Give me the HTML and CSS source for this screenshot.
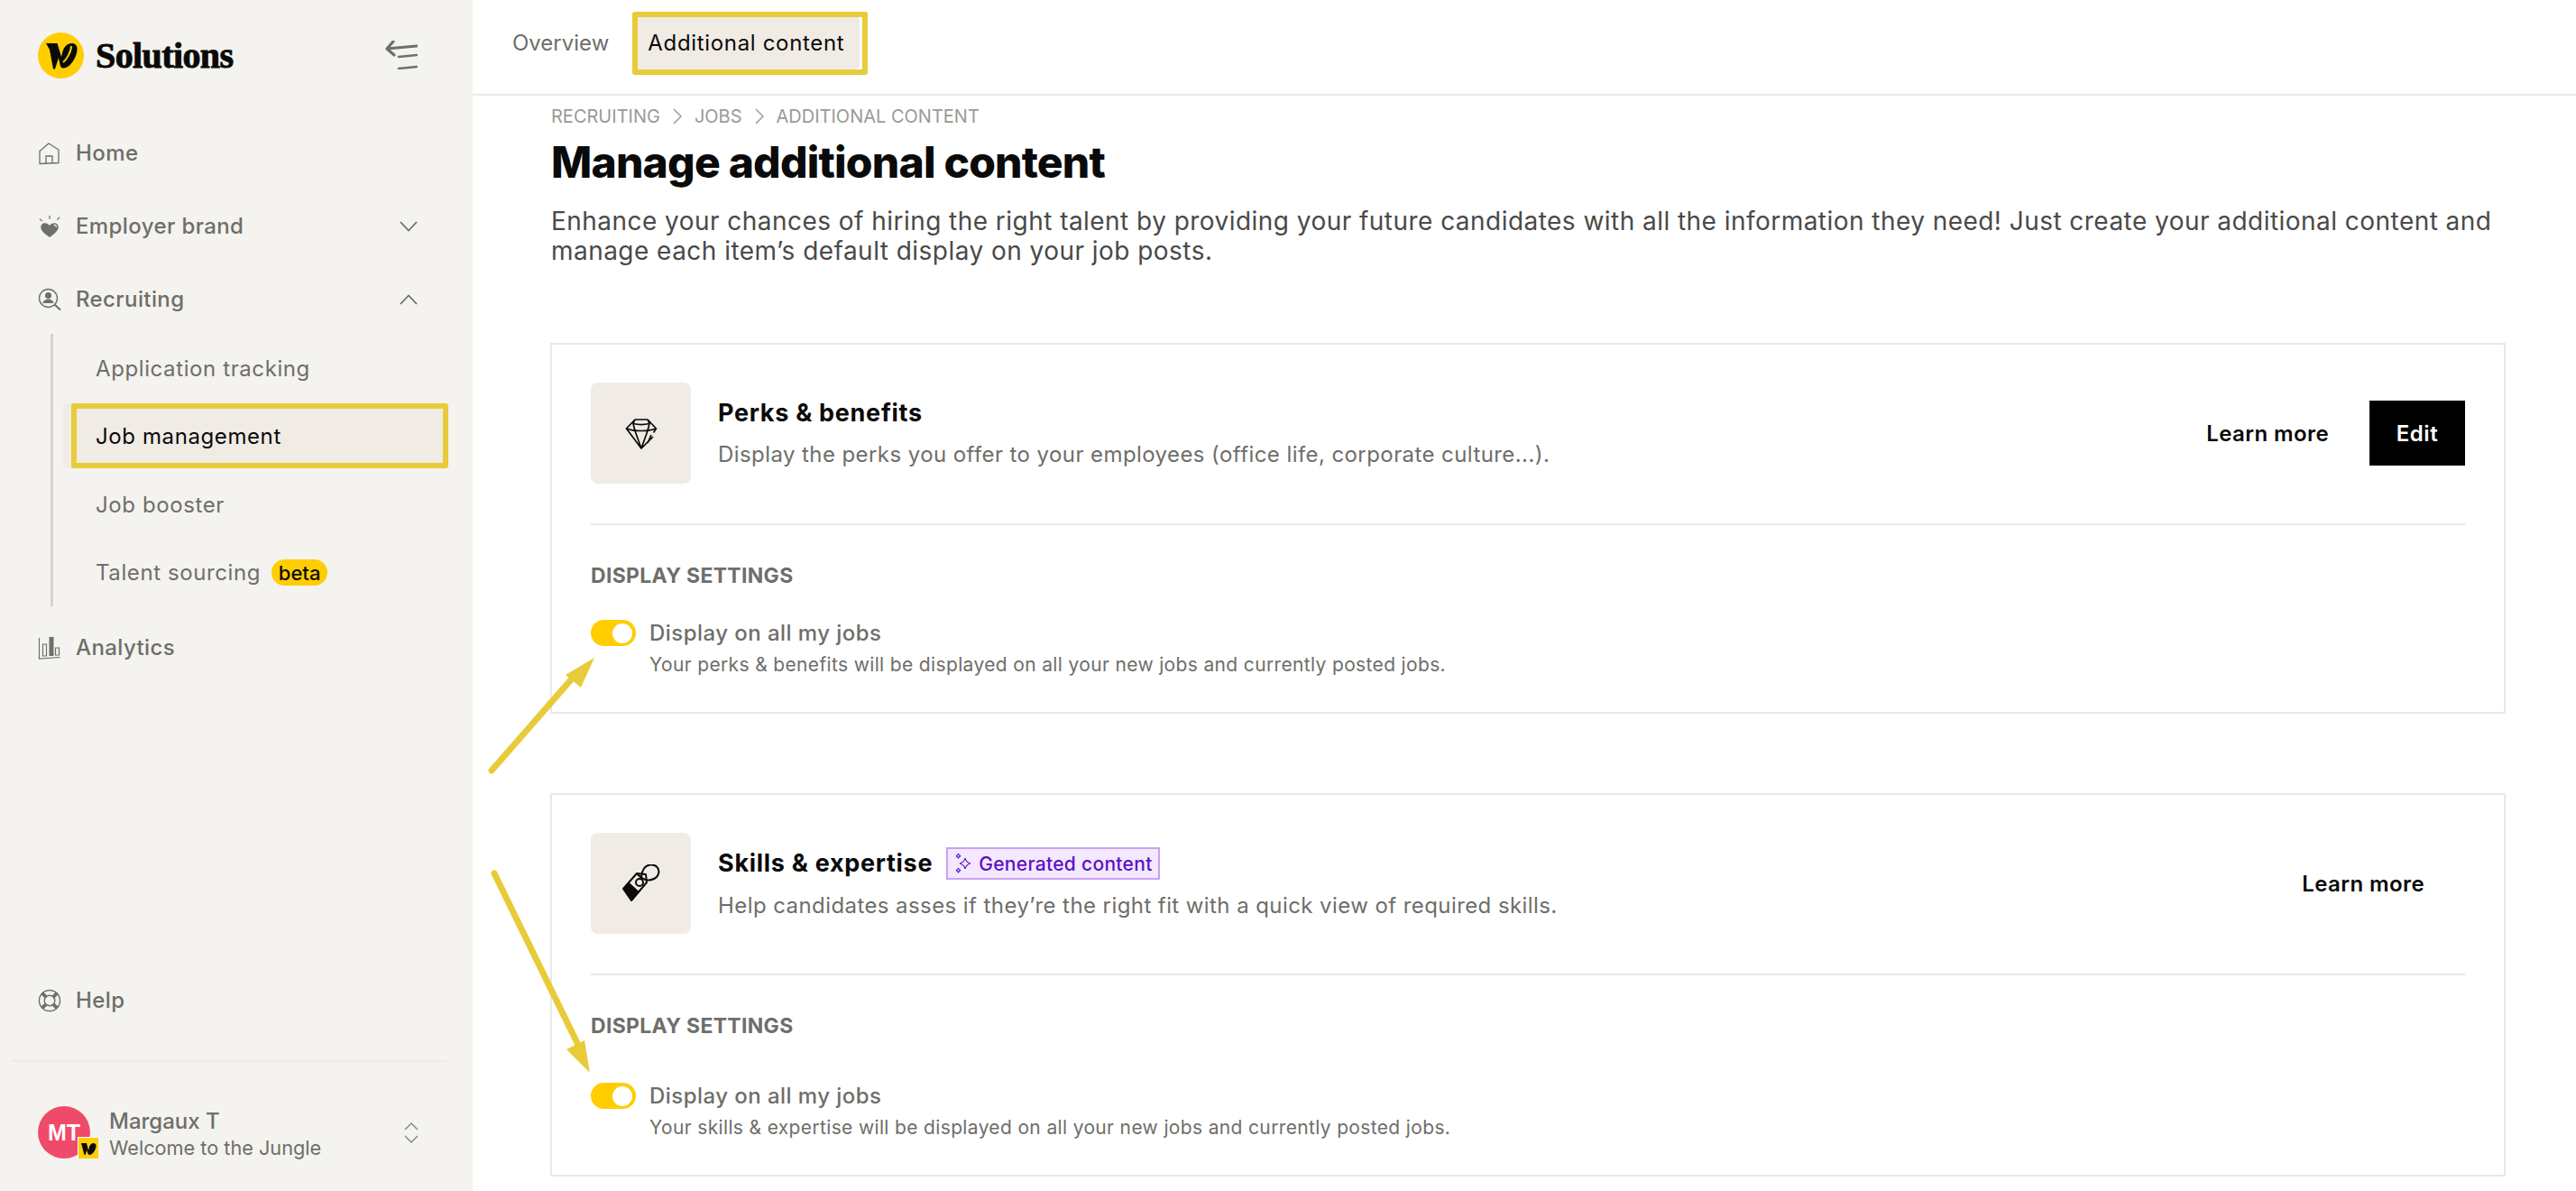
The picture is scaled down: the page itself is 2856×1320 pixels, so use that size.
FILE: index.html
```html
<!DOCTYPE html>
<html lang="en">
<head>
<meta charset="utf-8">
<title>Manage additional content</title>
<link rel="stylesheet" href="styles.css">
</head>
<body>
<div class="app">
  <aside class="sidebar">
    <div class="brand">
      <div class="brand-left">
        <svg class="logo" viewBox="0 0 51 51"><circle cx="25.500" cy="25.500" r="25.500" fill="#ffcd00"/><path d="M9 12h12.500l4.500 15 1.500-6c1.500-5 5-9 10-9 4 0 6 2.500 6 6.500 0 9-8 21-15 21-2.500 0-3.500-1.500-4-4l-1.500-7.500-4 12.500h-2l-4-21.500z" fill="#0a0a0a"/><path d="M28 33c4-3 9-12 9-18" fill="none" stroke="#ffcd00" stroke-width="2"/></svg>
        <span class="brand-name">Solutions</span>
      </div>
      <svg class="collapse" viewBox="0 0 36 32"><path d="M9 1 2 9l8 7M2 9l33-3" fill="none" stroke="#6e6e6a" stroke-width="3.200" stroke-linecap="round" stroke-linejoin="round"/><path d="M15 18l20-2M15 31l20-2" fill="none" stroke="#6e6e6a" stroke-width="2.400" stroke-linecap="round"/></svg>
    </div>
    <nav class="nav">
      <a class="nav-item"><svg class="nav-icon" viewBox="0 0 26 26"><path d="M2 10.500 12 2l11 7v14.500l-21 1zM9 24v-8h7v7.500" fill="none" stroke="#6e6e6a" stroke-width="1.300" stroke-linejoin="round"/></svg><span>Home</span></a>
      <a class="nav-item"><svg class="nav-icon" viewBox="0 0 26 28"><path d="M13 27C6 22 2.500 18.500 2.500 15c0-3 2-5 4.500-5 2.500 0 4.500 1 6 3 1.500-2 3.500-3 5.500-3 3 0 5 2 5 5 0 3.500-4 7-10.500 12z" fill="#6e6e6a"/><path d="M13 1v4M1 5l3 2.500M25 3l-3 3" fill="none" stroke="#6e6e6a" stroke-width="1.300"/><path d="M18 12a3 3 0 0 1 3 3" fill="none" stroke="#f4f3ef" stroke-width="1.200"/></svg><span>Employer brand</span><svg class="chev" viewBox="0 0 20 12"><path d="m1 1 9 9.500L19 1" fill="none" stroke="#6e6e6a" stroke-width="1.800"/></svg></a>
      <a class="nav-item"><svg class="nav-icon" viewBox="0 0 26 26"><circle cx="11.500" cy="11.500" r="10" fill="none" stroke="#6e6e6a" stroke-width="1.400"/><circle cx="11.500" cy="8.500" r="3.500" fill="#6e6e6a"/><path d="M5 17c1-3 4-4.500 6.500-4.500s5.500 1.500 6 4.500z" fill="#6e6e6a"/><path d="m18.500 18.500 6.500 6" stroke="#6e6e6a" stroke-width="2.200"/></svg><span>Recruiting</span><svg class="chev" viewBox="0 0 20 12"><path d="m1 11 9-9.500 9 9.500" fill="none" stroke="#6e6e6a" stroke-width="1.800"/></svg></a>
      <div class="subnav">
        <a class="sub-item">Application tracking</a>
        <a class="sub-item sub-active">Job management</a>
        <a class="sub-item">Job booster</a>
        <a class="sub-item">Talent sourcing<span class="beta">beta</span></a>
      </div>
      <a class="nav-item nav-analytics"><svg class="nav-icon" viewBox="0 0 26 26"><path d="M1.500 2v23l23-1.500" fill="none" stroke="#6e6e6a" stroke-width="1.200"/><path d="M5.500 9h4v13h-4zM19.500 13h4v8h-4z" fill="none" stroke="#6e6e6a" stroke-width="1.200"/><path d="M12.500 1h5v21h-5z" fill="#6e6e6a"/></svg><span>Analytics</span></a>
    </nav>
    <a class="nav-item nav-help"><svg class="nav-icon help-icon" viewBox="0 0 27 27"><circle cx="13.500" cy="13.500" r="12" fill="none" stroke="#6e6e6a" stroke-width="1.500"/><circle cx="13.500" cy="13.500" r="6" fill="none" stroke="#6e6e6a" stroke-width="1.500"/><path d="m5 5 4.500 4.500M22 5l-4.500 4.500M5 22l4.500-4.500M22 22l-4.500-4.500" stroke="#6e6e6a" stroke-width="4"/></svg><span>Help</span></a>
    <div class="user">
      <div class="avatar">MT
        <svg class="avatar-badge" viewBox="0 0 22 23"><rect width="22" height="23" fill="#ffcd00"/><path d="M3 6h6l2 8 1-4c.6-2 2.500-4 4.500-4 2 0 3 1 3 3 0 4-4 10-7 10-1.300 0-2-1-2.200-2l-.8-3-2 5h-1z" fill="#0a0a0a"/></svg>
      </div>
      <div class="user-text">
        <div class="user-name">Margaux T</div>
        <div class="user-org">Welcome to the Jungle</div>
      </div>
      <svg class="updown" viewBox="0 0 16 25"><path d="m1 9 7-7 7 7M1 16l7 7 7-7" fill="none" stroke="#8a8a86" stroke-width="1.500"/></svg>
    </div>
  </aside>
  <main class="main">
    <header class="topbar">
      <a class="tab">Overview</a>
      <a class="tab tab-active">Additional content</a>
    </header>
    <section class="content">
      <div class="crumbs"><span>RECRUITING</span><svg class="crumb-sep" viewBox="0 0 10 18"><path d="m1 1 8 8-8 8" fill="none" stroke="#9a9a96" stroke-width="1.500"/></svg><span>JOBS</span><svg class="crumb-sep" viewBox="0 0 10 18"><path d="m1 1 8 8-8 8" fill="none" stroke="#9a9a96" stroke-width="1.500"/></svg><span>ADDITIONAL CONTENT</span></div>
      <h1 class="page-title">Manage additional content</h1>
      <p class="intro">Enhance your chances of hiring the right talent by providing your future candidates with all the information they need! Just create your additional content and manage each item’s default display on your job posts.</p>

      <article class="card">
        <div class="card-head">
          <div class="thumb"><svg class="thumb-icon" viewBox="0 0 36 36"><path d="M31 22 18 35 1.500 13 11 3h14l9.500 10-3 4.500M1.500 13c5 2 10 2.500 16.500 2.500S29 15 34.500 13M9 7.500c6 1.500 12 1.500 18 0M11 3 9 7.500l2 8L18 35l7-19.500 2-8L25 3M25 29l4-9" fill="none" stroke="#0a0a0a" stroke-width="1.700" stroke-linejoin="round"/></svg></div>
          <div class="head-text">
            <h2 class="card-title">Perks &amp; benefits</h2>
            <p class="card-desc">Display the perks you offer to your employees (office life, corporate culture...).</p>
          </div>
          <div class="actions"><button class="btn-link">Learn more</button><button class="btn-dark">Edit</button></div>
        </div>
        <div class="divider"></div>
        <h3 class="settings-title">DISPLAY SETTINGS</h3>
        <div class="toggle-row">
          <span class="toggle"><span class="knob"></span></span>
          <div>
            <div class="toggle-label">Display on all my jobs</div>
            <div class="toggle-help">Your perks &amp; benefits will be displayed on all your new jobs and currently posted jobs.</div>
          </div>
        </div>
      </article>

      <article class="card card-second">
        <div class="card-head">
          <div class="thumb"><svg class="thumb-icon tag-icon" viewBox="0 0 42 42"><path d="m1 27 15-17 10 1 1 9-17 20z" fill="none" stroke="#0a0a0a" stroke-width="2" stroke-linejoin="round"/><path d="M1 27 7.500 20 19 30.500 11 40z" fill="#0a0a0a"/><circle cx="19" cy="20" r="4" fill="none" stroke="#0a0a0a" stroke-width="2"/><path d="M16 10c7 8 13 9 19 6 6-3 7-10 3-13.500-4-3.500-11-2.500-14 2-2 3-3 8-3 10" fill="none" stroke="#0a0a0a" stroke-width="2"/></svg></div>
          <div class="head-text">
            <div class="title-row">
              <h2 class="card-title">Skills &amp; expertise</h2>
              <span class="gen-badge"><svg class="spark" viewBox="0 0 20 24"><path d="M12 6c.7 3.500 2 5 6 6-4 1-5.300 2.500-6 6-.7-3.500-2-5-6-6 4-1 5.300-2.500 6-6zM4.500 1c.3 1.600.9 2.300 2.500 2.700C5.400 4.100 4.800 4.800 4.500 6.500 4.200 4.800 3.600 4.100 2 3.700 3.600 3.300 4.200 2.600 4.500 1zM4.500 17c.3 1.600.9 2.300 2.500 2.700-1.600.4-2.200 1.100-2.500 2.800-.3-1.700-.9-2.400-2.500-2.800 1.600-.4 2.200-1.100 2.500-2.700z" fill="none" stroke="#5a10c8" stroke-width="1.200"/></svg>Generated content</span>
            </div>
            <p class="card-desc">Help candidates asses if they’re the right fit with a quick view of required skills.</p>
          </div>
          <div class="actions"><button class="btn-link">Learn more</button></div>
        </div>
        <div class="divider"></div>
        <h3 class="settings-title">DISPLAY SETTINGS</h3>
        <div class="toggle-row">
          <span class="toggle"><span class="knob"></span></span>
          <div>
            <div class="toggle-label">Display on all my jobs</div>
            <div class="toggle-help">Your skills &amp; expertise will be displayed on all your new jobs and currently posted jobs.</div>
          </div>
        </div>
      </article>
    </section>
  </main>
  <svg class="annotations" viewBox="0 0 2856 1320">
    <path d="M545 854 636 750M548 968 640 1156" stroke="#e8cb38" stroke-width="7" stroke-linecap="round" fill="none"/>
    <path d="M659 729 627 748 644 762z" fill="#e8cb38"/>
    <path d="M654 1189 628 1163 648 1153z" fill="#e8cb38"/>
  </svg>
</div>
</body>
</html>
```
FILE: styles.css
```css
* { box-sizing: border-box; }
html, body { margin: 0; padding: 0; height: 100%; }
body { font-family: "Inter", "Liberation Sans", sans-serif; color: #0a0a0a; background: #fff; overflow: hidden; }
h1, h2, h3, p { margin: 0; }
button { font: inherit; border: 0; background: none; cursor: pointer; }

.app { position: relative; display: flex; width: 2856px; height: 1320px; overflow: hidden; }

/* Sidebar */
.sidebar { width: 524px; flex: none; height: 1320px; background: #f4f3ef; display: flex; flex-direction: column; color: #6e6e6a; }
.brand { display: flex; align-items: center; justify-content: space-between; padding: 36px 61px 0 42px; height: 87px; }
.brand-left { display: flex; align-items: center; gap: 13px; }
.logo { width: 51px; height: 51px; display: block; }
.brand-name { font-family: "Liberation Serif", serif; font-weight: 700; font-size: 40px; letter-spacing: -0.6px; color: #0a0a0a; -webkit-text-stroke: 0.9px #0a0a0a; }
.collapse { width: 36px; height: 32px; margin-top: -1px; }

.nav { margin-top: 42px; display: flex; flex-direction: column; }
.nav-item { display: flex; align-items: center; height: 81px; padding: 0 61px 0 42px; font-size: 24px; letter-spacing: 0.4px; color: #6e6e6a; font-weight: 450; }
.nav-icon { width: 26px; height: 26px; flex: none; margin-right: 16px; }
.chev { width: 20px; height: 12px; margin-left: auto; }
.nav-analytics { margin-top: 5px; }
.nav-help { margin-top: auto; margin-bottom: 26px; }

.subnav { margin: -2px 27px 0 56px; border-left: 3px solid #d4d3ce; display: flex; flex-direction: column; height: 302px; }
.sub-item { position: relative; display: flex; align-items: center; height: 72px; margin: 1.750px 0 1.750px 11px; padding: 1px 0 0 36px; font-size: 24px; letter-spacing: 0.6px; color: #6e6e6a; }
.sub-active { background: #f0ebe5; color: #0a0a0a; border-radius: 6px; }
.sub-active::after { content: ""; position: absolute; left: 9px; top: 0; right: 0; bottom: 0; border: 6px solid #e8cb38; border-radius: 3px; }
.beta { margin-left: 12px; height: 29px; width: 62px; border-radius: 15px; background: #ffcd00; color: #0a0a0a; font-size: 22px; letter-spacing: 0; font-weight: 500; display: flex; align-items: center; justify-content: center; }

.user { border-top: 2px solid #efeae6; margin: 0 29px 0 13px; display: flex; align-items: center; padding: 49px 0 36px 29px; height: 145px; }
.avatar { position: relative; width: 58px; height: 58px; flex: none; border-radius: 50%; background: #f04a6a; color: #fff; font-family: "Liberation Sans", sans-serif; font-weight: 700; font-size: 25px; display: flex; align-items: center; justify-content: center; }
.avatar-badge { position: absolute; right: -9px; bottom: 0; width: 23px; height: 24px; border-left: 1px solid #fff; border-top: 1px solid #fff; }
.user-text { margin: 3px 0 0 21px; }
.user-name { font-size: 24px; line-height: 30px; font-weight: 500; color: #6e6e6a; }
.user-org { font-size: 21.700px; line-height: 28px; color: #6e6e6a; }
.updown { width: 16px; height: 25px; margin-left: auto; margin-right: 31px; }

/* Main */
.main { flex: 1; min-width: 0; display: flex; flex-direction: column; }
.topbar { height: 106px; flex: none; border-bottom: 2px solid #e8e8e8; padding: 17px 0 0 26px; display: flex; align-items: flex-start; gap: 8px; }
.tab { position: relative; height: 60px; padding: 0 18px; display: flex; align-items: center; font-size: 24px; color: #6e6e6a; border-radius: 6px; }
.tab-active { background: #f0ebe5; color: #0a0a0a; padding: 0 17px; letter-spacing: 0.67px; }
.tab-active::after { content: ""; position: absolute; left: 0; top: -4px; right: -9px; bottom: -6px; border: 6px solid #e8cb38; border-radius: 3px; }

.content { padding: 11px 78px 0 86px; }
.crumbs { display: flex; align-items: center; gap: 14px; height: 24px; padding-left: 1px; font-size: 20px; color: #9a9a96; line-height: 24px; }
.crumb-sep { width: 10px; height: 18px; }
.page-title { margin-top: 11px; padding-left: 1px; font-size: 48px; line-height: 56px; font-weight: 800; letter-spacing: -0.8px; }
.intro { margin-top: 21px; padding-left: 1px; font-size: 28px; line-height: 33px; letter-spacing: 0.46px; color: #4a4a48; }

.card { margin-top: 85px; border: 2px solid #e8e8e8; padding: 42px 43px 40px 43px; }
.card-second { margin-top: 88px; }
.card-second .toggle-row { margin-top: 49px; }
.card-head { display: flex; align-items: center; height: 112px; }
.thumb { width: 111px; height: 112px; flex: none; border-radius: 8px; background: #f0ebe5; display: flex; align-items: center; justify-content: center; }
.thumb-icon { width: 36px; height: 36px; }
.tag-icon { width: 42px; height: 42px; }
.head-text { margin-left: 30px; flex: 1; min-width: 0; }
.card-title { font-size: 27px; line-height: 34px; font-weight: 700; letter-spacing: 0.7px; }
.title-row { display: flex; align-items: center; gap: 15px; min-height: 36px; }
.card-desc { margin-top: 14px; font-size: 24px; line-height: 30px; letter-spacing: 0.42px; color: #6e6e6a; }
.actions { display: flex; align-items: center; flex: none; }
.btn-link { height: 72px; padding: 0 45px; font-size: 24px; font-weight: 600; letter-spacing: 0.4px; color: #0a0a0a; }
.btn-dark { height: 72px; width: 106px; background: #000; color: #fff; font-size: 24px; font-weight: 600; letter-spacing: 0.6px; }
.gen-badge { display: inline-flex; align-items: center; gap: 7px; height: 36px; padding: 0 6px 0 7px; background: #f3e8fd; border: 2px solid #c9a0f5; color: #5a10c8; font-size: 21px; letter-spacing: 0.3px; font-weight: 500; }
.spark { width: 20px; height: 24px; }

.divider { margin-top: 44px; height: 2px; background: #e8e8e8; }
.settings-title { margin-top: 42px; font-size: 23px; line-height: 28px; font-weight: 700; letter-spacing: 0.3px; color: #6e6e6a; }
.toggle-row { margin-top: 35px; display: flex; gap: 15px; align-items: flex-start; }
.toggle { width: 50px; height: 29px; flex: none; border-radius: 15px; background: #ffcd00; display: flex; align-items: center; justify-content: flex-end; padding-right: 4px; }
.knob { width: 22px; height: 22px; border-radius: 50%; background: #fff; }
.toggle-label { font-size: 24px; line-height: 30px; letter-spacing: 0.45px; color: #6e6e6a; font-weight: 450; }
.toggle-help { margin-top: 7px; margin-bottom: -1px; font-size: 21px; line-height: 26px; letter-spacing: 0.35px; color: #6e6e6a; }

.annotations { position: absolute; left: 0; top: 0; width: 2856px; height: 1320px; pointer-events: none; }
```
